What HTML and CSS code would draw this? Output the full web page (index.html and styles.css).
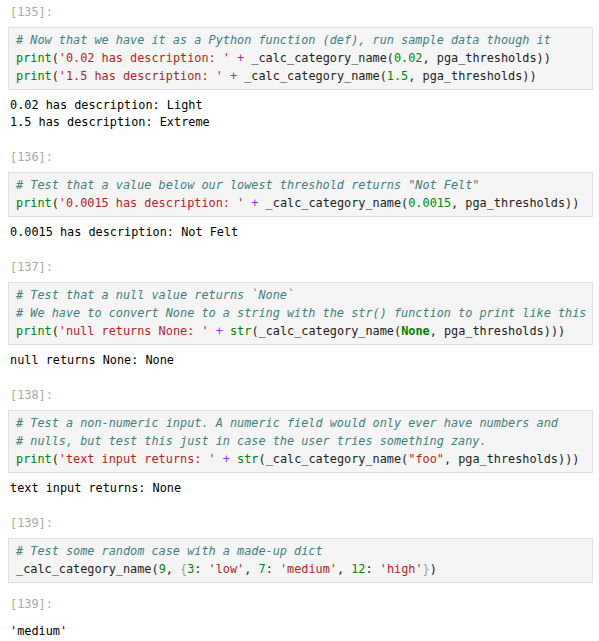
FILE: index.html
```html
<!DOCTYPE html>
<html>
<head>
<meta charset="utf-8">
<link rel="stylesheet" href="styles.css">
</head>
<body>
<div class="nb">
  <div class="cell">
    <div class="prompt">[135]:</div>
    <pre class="code"><span class="c"># Now that we have it as a Python function (def), run sample data though it</span>
<span class="b">print</span>(<span class="s">'0.02 has description: '</span> <span class="o">+</span> _calc_category_name(<span class="n">0.02</span>, pga_thresholds))
<span class="b">print</span>(<span class="s">'1.5 has description: '</span> <span class="o">+</span> _calc_category_name(<span class="n">1.5</span>, pga_thresholds))</pre>
    <pre class="out">0.02 has description: Light
1.5 has description: Extreme</pre>
  </div>
  <div class="cell">
    <div class="prompt">[136]:</div>
    <pre class="code"><span class="c"># Test that a value below our lowest threshold returns "Not Felt"</span>
<span class="b">print</span>(<span class="s">'0.0015 has description: '</span> <span class="o">+</span> _calc_category_name(<span class="n">0.0015</span>, pga_thresholds))</pre>
    <pre class="out">0.0015 has description: Not Felt</pre>
  </div>
  <div class="cell">
    <div class="prompt">[137]:</div>
    <pre class="code"><span class="c"># Test that a null value returns `None`</span>
<span class="c"># We have to convert None to a string with the str() function to print like this</span>
<span class="b">print</span>(<span class="s">'null returns None: '</span> <span class="o">+</span> <span class="b">str</span>(_calc_category_name(<span class="k">None</span>, pga_thresholds)))</pre>
    <pre class="out">null returns None: None</pre>
  </div>
  <div class="cell">
    <div class="prompt">[138]:</div>
    <pre class="code"><span class="c"># Test a non-numeric input. A numeric field would only ever have numbers and</span>
<span class="c"># nulls, but test this just in case the user tries something zany.</span>
<span class="b">print</span>(<span class="s">'text input returns: '</span> <span class="o">+</span> <span class="b">str</span>(_calc_category_name(<span class="s">"foo"</span>, pga_thresholds)))</pre>
    <pre class="out">text input returns: None</pre>
  </div>
  <div class="cell">
    <div class="prompt">[139]:</div>
    <pre class="code"><span class="c"># Test some random case with a made-up dict</span>
_calc_category_name(<span class="n">9</span>, <span class="br">{</span><span class="n">3</span>: <span class="s">'low'</span>, <span class="n">7</span>: <span class="s">'medium'</span>, <span class="n">12</span>: <span class="s">'high'</span><span class="br">}</span>)</pre>
    <div class="prompt out-prompt">[139]:</div>
    <pre class="out result">'medium'</pre>
  </div>
</div>
</body>
</html>
```
FILE: styles.css
```css
html, body {
  margin: 0;
  padding: 0;
  background: #ffffff;
}
body {
  font-family: "DejaVu Sans Mono", "Liberation Mono", monospace;
  font-size: 11.85px;
  color: #000;
}
.nb {
  display: flex;
  flex-direction: column;
  gap: 18px;
  padding: 4px 6px 0 8px;
}
.cell {
  display: flex;
  flex-direction: column;
}
.prompt {
  color: #a8a8a8;
  line-height: 17px;
  padding-left: 2px;
  margin-bottom: 6px;
}
.code {
  margin: 0;
  font: inherit;
  line-height: 18px;
  background: #f5f5f5;
  border: 1px solid #e0e0e0;
  padding: 3px 7px 4px 7px;
  color: #212121;
  white-space: pre;
  overflow: hidden;
}
.out {
  margin: 7px 0 0 0;
  font: inherit;
  line-height: 17px;
  padding-left: 2px;
  white-space: pre;
}
.out-prompt {
  margin-top: 13px;
  margin-bottom: 10px;
}
.result {
  margin-top: 0;
}
.c { color: #408080; font-style: italic; }
.b { color: #008000; }
.s { color: #ba2121; }
.n { color: #008800; }
.o { color: #aa22ff; }
.k { color: #008000; font-weight: bold; }
.br { color: #99a0b0; }
```
